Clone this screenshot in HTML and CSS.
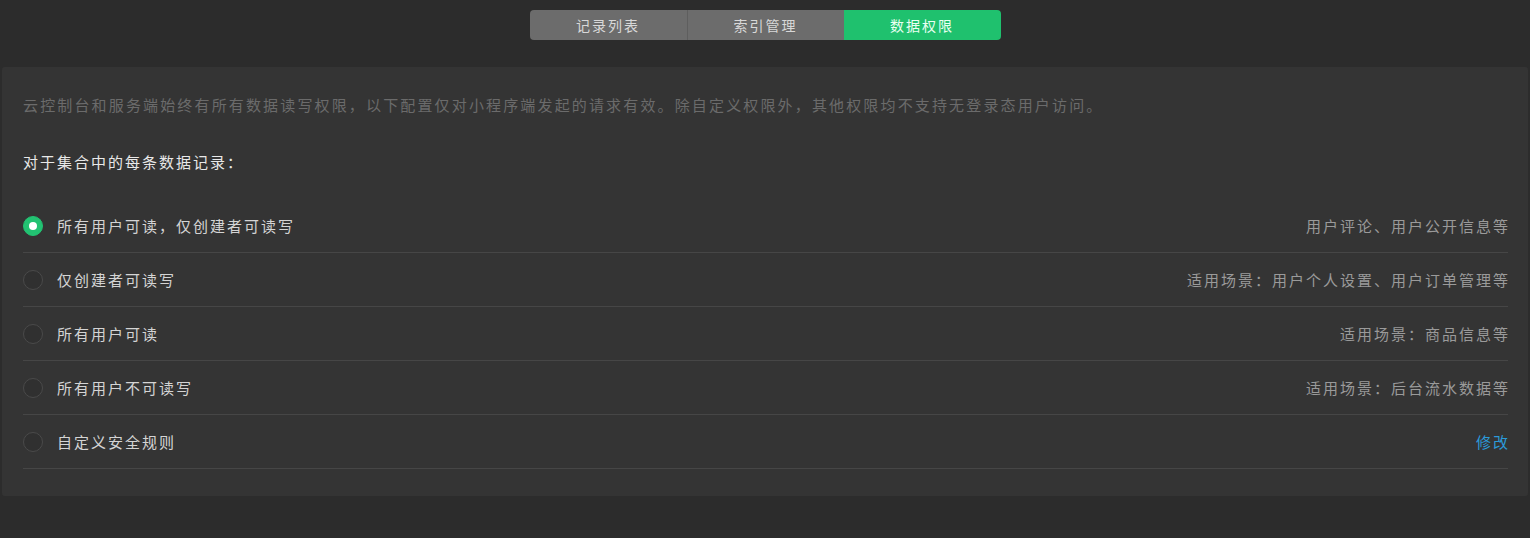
FILE: index.html
```html
<!DOCTYPE html>
<html lang="zh-CN">
<head>
    <meta charset="UTF-8">
    <title>数据权限</title>
    <link rel="stylesheet" href="styles.css">
</head>
<body>
    <div class="tabs">
        <div class="tab">记录列表</div>
        <div class="tab">索引管理</div>
        <div class="tab active">数据权限</div>
    </div>

    <div class="panel">
        <p class="desc">云控制台和服务端始终有所有数据读写权限，以下配置仅对小程序端发起的请求有效。除自定义权限外，其他权限均不支持无登录态用户访问。</p>
        <p class="title">对于集合中的每条数据记录：</p>

        <div class="options">
            <div class="option">
                <span class="radio checked"></span>
                <span class="label">所有用户可读，仅创建者可读写</span>
                <span class="hint">用户评论、用户公开信息等</span>
            </div>
            <div class="option">
                <span class="radio"></span>
                <span class="label">仅创建者可读写</span>
                <span class="hint">适用场景：用户个人设置、用户订单管理等</span>
            </div>
            <div class="option">
                <span class="radio"></span>
                <span class="label">所有用户可读</span>
                <span class="hint">适用场景：商品信息等</span>
            </div>
            <div class="option">
                <span class="radio"></span>
                <span class="label">所有用户不可读写</span>
                <span class="hint">适用场景：后台流水数据等</span>
            </div>
            <div class="option">
                <span class="radio"></span>
                <span class="label">自定义安全规则</span>
                <a class="link" href="#">修改</a>
            </div>
        </div>
    </div>
</body>
</html>
```

FILE: styles.css
```css
body {
    margin: 0;
    background-color: #2c2c2c;
    font-family: "Noto Sans CJK SC", sans-serif;
    font-size: 15px;
}

p {
    margin: 0;
}

.tabs {
    display: flex;
    justify-content: center;
    padding-top: 10px;
}

.tab {
    width: 157px;
    height: 30px;
    line-height: 30px;
    text-align: center;
    font-size: 14px;
    letter-spacing: 2px;
    color: #d8d8d8;
    background-color: #6c6c6c;
    border-left: 1px solid #5e5e5e;
    box-sizing: border-box;
}

.tab:first-child {
    border-left: none;
    border-radius: 4px 0 0 4px;
}

.tab.active {
    border-left: none;
    background-color: #1fc16e;
    color: #e9fff2;
    border-radius: 0 4px 4px 0;
}

.panel {
    margin: 27px 2px 0;
    padding: 28px 20px 27px 21px;
    background-color: #343434;
    border-radius: 3px;
}

.desc {
    line-height: 20px;
    color: #6b6b6b;
    letter-spacing: 2.15px;
}

.title {
    margin-top: 37px;
    line-height: 20px;
    color: #e8e8e8;
    letter-spacing: 2px;
}

.options {
    margin-top: 27px;
}

.option {
    display: flex;
    align-items: center;
    height: 53px;
    border-bottom: 1px solid #464646;
}

.radio {
    width: 18px;
    height: 18px;
    border: 1px solid #4a4a4a;
    border-radius: 50%;
    background-color: #303030;
    margin-right: 14px;
    flex-shrink: 0;
    display: flex;
    align-items: center;
    justify-content: center;
}

.radio.checked {
    border-color: #22c272;
    background-color: #22c272;
}

.radio.checked::after {
    content: "";
    width: 8px;
    height: 8px;
    border-radius: 50%;
    background-color: #fff;
}

.label {
    flex: 1;
    color: #d4d4d4;
    letter-spacing: 2px;
}

.hint {
    color: #9a9a9a;
    letter-spacing: 2px;
    margin-right: -2px;
}

.link {
    color: #2b9ad9;
    text-decoration: none;
    letter-spacing: 2px;
    margin-right: -2px;
}
```
